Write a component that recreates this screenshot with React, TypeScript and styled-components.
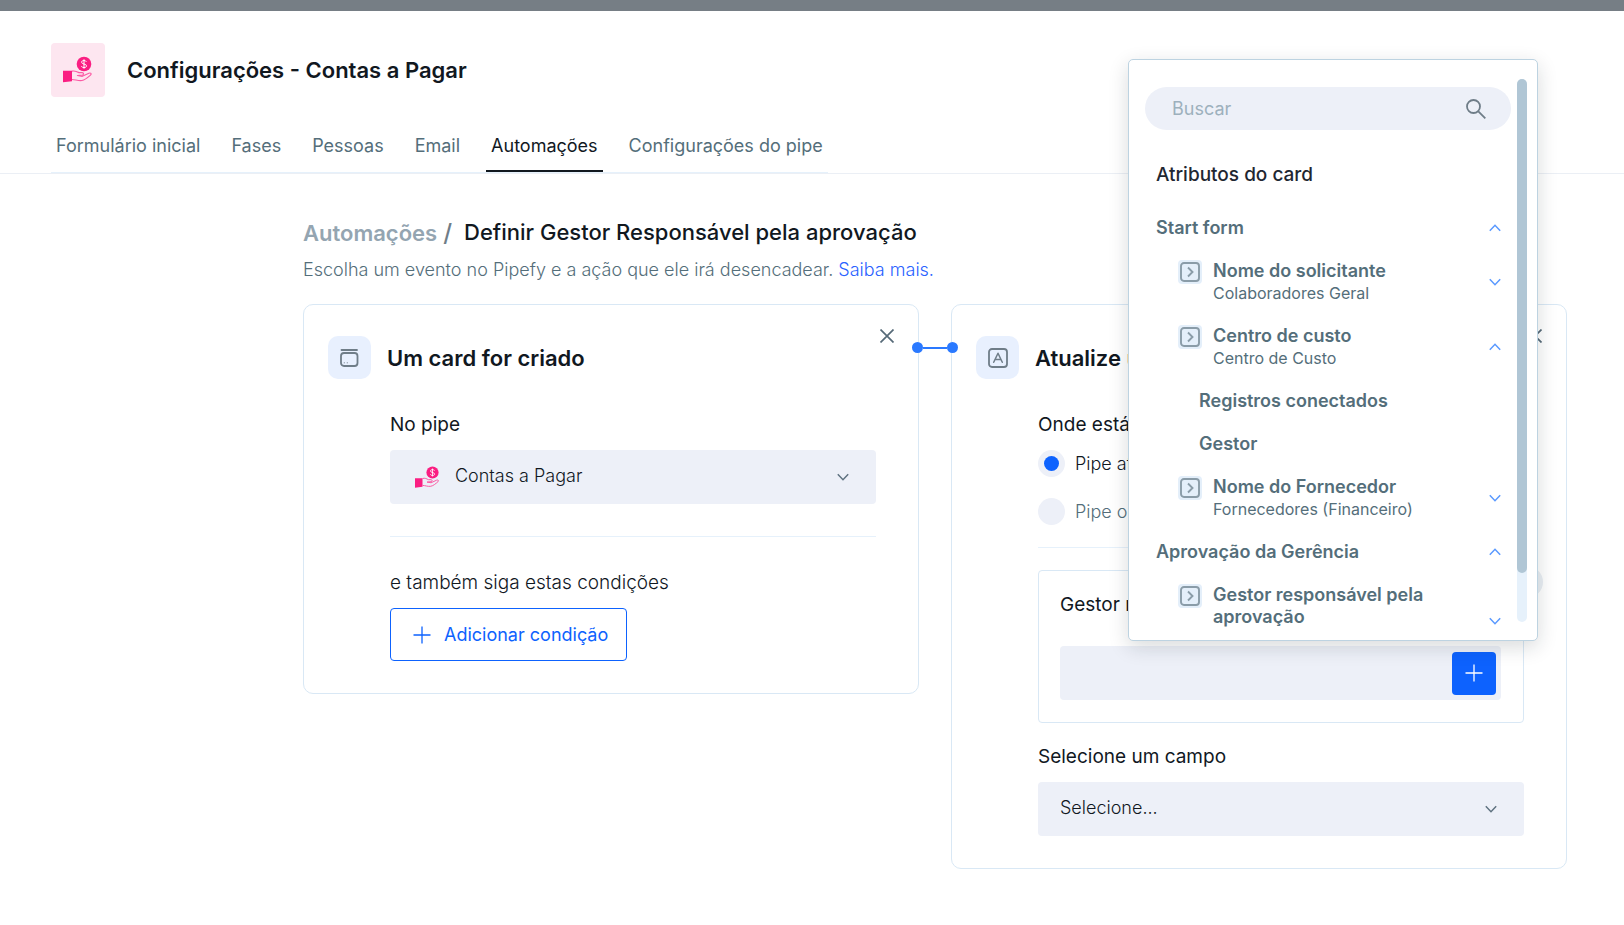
import React from "react";
import styled, { createGlobalStyle, css } from "styled-components";

const color = {
  ink: "#11181f",
  slate: "#546e7a",
  muted: "#94a5b1",
  line: "#d9e8f5",
  rule: "#e6f1fb",
  field: "#edf0f8",
  tint: "#e8f0fe",
  blue: "#0d62fe",
  link: "#2a62ff",
  pink: "#fa1e82",
  icon: "#6f7d88",
};

const GlobalStyle = createGlobalStyle`
  *, *::before, *::after { box-sizing: border-box; }
  body {
    margin: 0;
    background: #fff;
    color: ${color.ink};
    font-family: Inter, "Liberation Sans", sans-serif;
    font-size: 18px;
    line-height: 22px;
  }
  h1, h2, h3, p { margin: 0; padding: 0; }
  a { text-decoration: none; }
  button, input, select { font: inherit; color: inherit; }
  button { cursor: pointer; padding: 0; border: 0; background: none; }
  svg { display: block; flex: none; }
`;

const Page = styled.div`
  position: relative;
  border-top: 11px solid #767e85;
  padding-bottom: 56px;
`;

const Header = styled.header`
  padding: 32px 51px 0;
  border-bottom: 1px solid #ebeff5;
`;

const Brand = styled.div`
  display: flex;
  align-items: center;
  gap: 22px;
`;

const BrandIcon = styled.div`
  display: grid;
  place-items: center;
  width: 54px;
  height: 54px;
  border-radius: 4px;
  background: #fde6f0;
`;

const PageTitle = styled.h1`
  font-size: 22px;
  line-height: 28px;
  font-weight: 600;
`;

const Tabs = styled.nav`
  display: flex;
  gap: 21px;
  width: max-content;
  margin-top: 32px;
  border-bottom: 1px solid ${color.rule};
`;

const Tab = styled.a<{ $active?: boolean }>`
  height: 43px;
  padding: 6px 5px 0;
  color: ${(p) => (p.$active ? color.ink : color.slate)};
  border-bottom: 2px solid ${(p) => (p.$active ? color.ink : "transparent")};
`;

const Main = styled.main`
  padding: 44px 57px 0 303px;
`;

const Crumbs = styled.div`
  display: flex;
  align-items: center;
  font-size: 22px;
  line-height: 28px;
`;

const CrumbLink = styled.a`
  color: ${color.muted};
  font-weight: 600;
`;

const Slash = styled.span`
  margin: 0 12px 0 6px;
  color: ${color.icon};
  font-size: 24px;
  font-weight: 500;
`;

const CrumbTitle = styled.h2`
  padding-bottom: 2px;
  font-size: 22px;
  line-height: 28px;
  font-weight: 500;
`;

const Lead = styled.p`
  margin-top: 11px;
  color: ${color.slate};
  font-weight: 300;
`;

const Link = styled.a`
  color: ${color.link};
`;

const Columns = styled.div`
  display: grid;
  grid-template-columns: 1fr 1fr;
  gap: 32px;
  align-items: start;
  margin-top: 23px;
`;

const Card = styled.section`
  position: relative;
  min-width: 0;
  padding: 31px 42px 32px 24px;
  border: 1px solid ${color.line};
  border-radius: 10px;
`;

const CardHead = styled.div`
  display: flex;
  align-items: center;
  gap: 16px;
`;

const CardIcon = styled.div`
  display: grid;
  place-items: center;
  flex: none;
  width: 43px;
  height: 43px;
  border-radius: 10px;
  background: ${color.tint};
`;

const CardTitle = styled.h3`
  overflow: hidden;
  font-size: 22px;
  line-height: 28px;
  font-weight: 600;
  white-space: nowrap;
`;

const Close = styled.button`
  position: absolute;
  top: 24px;
  right: 24px;
`;

const CardBody = styled.div`
  padding: 33px 0 0 62px;
`;

const Label = styled.label`
  display: block;
  font-size: 19px;
  line-height: 26px;
`;

const Legend = styled.legend`
  padding: 0;
  font-size: 19px;
  line-height: 26px;
`;

const SelectBox = styled.div`
  position: relative;
  display: flex;
  align-items: center;
  margin-top: 12px;
`;

const Select = styled.select<{ $withIcon?: boolean }>`
  appearance: none;
  width: 100%;
  height: 54px;
  padding: 0 48px 2px ${(p) => (p.$withIcon ? 65 : 22)}px;
  border: 0;
  border-radius: 4px;
  background: ${color.field};
  font-weight: 300;
`;

const SelectIcon = styled.span`
  position: absolute;
  left: 25px;
  pointer-events: none;
`;

const SelectArrow = styled.span`
  position: absolute;
  right: 26px;
  pointer-events: none;
`;

const Divider = styled.hr<{ $gap: number }>`
  height: 1px;
  margin: ${(p) => p.$gap}px 0 0;
  border: 0;
  background: ${color.rule};
`;

const Conditions = styled.p`
  margin-top: 33px;
  font-size: 19px;
  line-height: 26px;
  font-weight: 300;
`;

const AddCondition = styled.button`
  display: flex;
  align-items: center;
  gap: 13px;
  height: 53px;
  margin-top: 12px;
  padding: 0 18px 0 22px;
  border: 1px solid ${color.blue};
  border-radius: 4px;
  color: ${color.blue};
`;

const Connector = styled.div`
  position: absolute;
  top: 37px;
  left: -40px;
  display: flex;
  align-items: center;
`;

const Dot = styled.i`
  width: 11px;
  height: 11px;
  border-radius: 50%;
  background: #2a79ff;
`;

const Wire = styled.i`
  width: 24px;
  height: 2px;
  background: #2a79ff;
`;

const Choices = styled.fieldset`
  min-width: 0;
  margin: 0;
  padding: 0;
  border: 0;
`;

const Choice = styled.label<{ $dim?: boolean }>`
  display: flex;
  align-items: center;
  gap: 10px;
  height: 27px;
  margin-top: ${(p) => (p.$dim ? 21 : 12)}px;
  color: ${(p) => (p.$dim ? color.slate : color.ink)};
  font-weight: 300;
`;

const Radio = styled.input`
  appearance: none;
  display: grid;
  place-items: center;
  width: 27px;
  height: 27px;
  margin: 0;
  border-radius: 50%;
  background: ${color.field};

  &:checked::before {
    content: "";
    width: 15px;
    height: 15px;
    border-radius: 50%;
    background: ${color.blue};
  }
`;

const FieldGroup = styled.div`
  position: relative;
  margin-top: 22px;
  padding: 21px 22px 22px 21px;
  border: 1px solid ${color.line};
  border-radius: 4px;
`;

const Remove = styled.button`
  position: absolute;
  top: -5px;
  right: -20px;
  width: 32px;
  height: 32px;
  border-radius: 50%;
  background: #e9eef4;
`;

const FieldRow = styled.div`
  display: flex;
  align-items: center;
  margin-top: 28px;
  padding-right: 5px;
  border-radius: 4px;
  background: ${color.field};
`;

const FieldInput = styled.input`
  flex: 1;
  min-width: 0;
  height: 54px;
  padding: 0 22px;
  border: 0;
  background: none;
`;

const AddField = styled.button`
  display: grid;
  place-items: center;
  width: 44px;
  height: 43px;
  border-radius: 4px;
  background: ${color.blue};
  color: #fff;
`;

const LastField = styled.div`
  margin-top: 21px;
`;

const Popover = styled.aside`
  position: absolute;
  top: 48px;
  right: 86px;
  display: flex;
  justify-content: space-between;
  width: 410px;
  padding: 19px 10px 12px 16px;
  border: 1px solid #bdd3e1;
  border-radius: 5px;
  background: #fff;
  box-shadow: 0 6px 20px rgba(20, 30, 40, 0.16);
`;

const PopoverBody = styled.div`
  width: 366px;
  padding-top: 8px;
`;

const Search = styled.div`
  display: flex;
  align-items: center;
  height: 43px;
  padding: 0 25px 0 27px;
  border-radius: 22px;
  background: ${color.field};
`;

const SearchInput = styled.input`
  flex: 1;
  min-width: 0;
  padding: 0;
  border: 0;
  outline: 0;
  background: none;

  &::placeholder {
    color: #9db0bd;
    opacity: 1;
  }
`;

const ListTitle = styled.h3`
  margin: 34px 0 31px 11px;
  font-size: 19px;
  line-height: 22px;
  font-weight: 500;
  color: #1f2732;
`;

const List = styled.div`
  display: flex;
  flex-direction: column;
  gap: 21px;
`;

const rowLayout = css`
  display: flex;
  width: 100%;
  padding-right: 9px;
  text-align: left;
  color: ${color.slate};
`;

const GroupRow = styled.button`
  ${rowLayout}
  align-items: center;
  justify-content: space-between;
  padding-left: 11px;
  font-weight: 600;
`;

const FieldItem = styled.button<{ $wraps: boolean }>`
  ${rowLayout}
  align-items: ${(p) => (p.$wraps ? "flex-end" : "center")};
  padding-left: 33px;
`;

const FieldBadge = styled.span`
  display: grid;
  place-items: center;
  align-self: flex-start;
  flex: none;
  width: 24px;
  height: 24px;
  margin-right: 11px;
  border-radius: 4px;
  background: #e4effa;
`;

const FieldText = styled.span`
  flex: 1;
  display: flex;
  flex-direction: column;
`;

const FieldName = styled.span`
  max-width: 220px;
  font-weight: 600;
`;

const FieldSource = styled.span`
  font-size: 16px;
`;

const SubItem = styled.button`
  ${rowLayout}
  padding-left: 54px;
  font-weight: 600;
`;

const ScrollTrack = styled.div`
  width: 10px;
  margin-bottom: 6px;
  border-radius: 5px;
  background: #e6f1fb;
`;

const ScrollThumb = styled.div`
  height: 91%;
  border-radius: 5px;
  background: #b0c6d5;
`;

function HandCoin({ size }: { size: number }) {
  return (
    <svg width={size} height={size} viewBox="1 0 30 30" fill="none">
      <circle cx="22" cy="9" r="7.3" fill={color.pink} />
      <path
        d="M24.4 6.8c-.4-.9-1.300-1.300-2.400-1.300-1.400 0-2.400.6-2.400 1.700 0 2.500 4.900 1.200 4.900 3.700 0 1.100-1.100 1.700-2.500 1.700-1.300 0-2.200-.5-2.600-1.400M22 4.300v9.400"
        stroke="#fff"
        strokeWidth="1"
      />
      <path d="M1 15.800h9v10.400L1 27.300z" fill={color.pink} />
      <path
        d="M10 16.200c3-.8 5 .3 7 1.400h3.200c1.600 0 1.900 2.100.2 2.400l-5 .5 4.900.8 6.600-3.100c1.900-.7 3 .7 1.600 1.900-2.500 2.200-5.500 4.800-8.500 5.400-3.500.6-7-1-10-1"
        stroke="#fb5ba4"
        strokeWidth="1.200"
        strokeLinejoin="round"
      />
    </svg>
  );
}

function Chevron({ up, stroke = "#5f7280" }: { up?: boolean; stroke?: string }) {
  return (
    <svg width="14" height="14" viewBox="0 0 14 14" fill="none" stroke={stroke} strokeWidth="1.500">
      <path d={up ? "M1.800 9.700 7 4.300l5.200 5.400" : "M1.800 4.300 7 9.700l5.200-5.400"} />
    </svg>
  );
}

function Plus() {
  return (
    <svg width="18" height="18" viewBox="0 0 18 18" stroke="currentColor" strokeWidth="1.300">
      <path d="M9 .5v17M.5 9h17" />
    </svg>
  );
}

function Cross() {
  return (
    <svg width="14" height="14" viewBox="0 0 14 14" stroke="#566a78" strokeWidth="1.700">
      <path d="M.5.5l13 13M13.500.5l-13 13" />
    </svg>
  );
}

function CardGlyph() {
  return (
    <svg width="20" height="20" viewBox="1 0 20 20" fill="none" stroke={color.icon} strokeWidth="1.800" strokeLinecap="round">
      <path d="M2.500 2h15.500" />
      <rect x="2" y="5" width="16.500" height="13" rx="3" />
      <path d="M5.200 14.800h.2M8.200 14.800h.2" strokeWidth="1" />
    </svg>
  );
}

function LetterGlyph() {
  return (
    <svg width="20" height="20" viewBox="0 0 20 20" fill="none" stroke={color.icon} strokeWidth="1.800" strokeLinecap="round" strokeLinejoin="round">
      <rect x="1" y="1" width="18" height="18" rx="3" />
      <path d="M5.700 14.300 10 5.200l4.300 9.100M7.200 11.600h5.600" strokeWidth="1.500" />
    </svg>
  );
}

function FieldGlyph() {
  return (
    <svg width="20" height="20" viewBox="0 0 20 20" fill="none" stroke="#8a9ca8" strokeWidth="1.900">
      <rect x="1" y="1" width="18" height="18" rx="3" />
      <path d="m8 5.500 4.500 4.500L8 14.500" />
    </svg>
  );
}

function Magnifier() {
  return (
    <svg width="20" height="20" viewBox="0 0 20 20" fill="none" stroke={color.icon} strokeWidth="1.800">
      <circle cx="7.500" cy="7.500" r="6.500" />
      <path d="m12.300 12.300 7 7" />
    </svg>
  );
}

const tabs = ["Formulário inicial", "Fases", "Pessoas", "Email", "Automações", "Configurações do pipe"];

function Group({ children }: { children: React.ReactNode }) {
  return (
    <GroupRow type="button">
      {children}
      <Chevron up stroke="#5a99ff" />
    </GroupRow>
  );
}

function Field({ name, source, open }: { name: string; source?: string; open?: boolean }) {
  return (
    <FieldItem type="button" $wraps={!source}>
      <FieldBadge>
        <FieldGlyph />
      </FieldBadge>
      <FieldText>
        <FieldName>{name}</FieldName>
        {source && <FieldSource>{source}</FieldSource>}
      </FieldText>
      <Chevron up={open} stroke="#5a99ff" />
    </FieldItem>
  );
}

export default function App() {
  return (
    <Page>
      <GlobalStyle />
      <Header>
        <Brand>
          <BrandIcon>
            <HandCoin size={30} />
          </BrandIcon>
          <PageTitle>Configurações - Contas a Pagar</PageTitle>
        </Brand>
        <Tabs>
          {tabs.map((tab) => (
            <Tab key={tab} href="#" $active={tab === "Automações"}>
              {tab}
            </Tab>
          ))}
        </Tabs>
      </Header>

      <Main>
        <Crumbs>
          <CrumbLink href="#">Automações</CrumbLink>
          <Slash>/</Slash>
          <CrumbTitle>Definir Gestor Responsável pela aprovação</CrumbTitle>
        </Crumbs>
        <Lead>
          Escolha um evento no Pipefy e a ação que ele irá desencadear. <Link href="#">Saiba mais.</Link>
        </Lead>

        <Columns>
          <Card>
            <CardHead>
              <CardIcon>
                <CardGlyph />
              </CardIcon>
              <CardTitle>Um card for criado</CardTitle>
            </CardHead>
            <Close type="button" aria-label="Fechar">
              <Cross />
            </Close>
            <CardBody>
              <Label htmlFor="pipe">No pipe</Label>
              <SelectBox>
                <Select id="pipe" $withIcon>
                  <option>Contas a Pagar</option>
                </Select>
                <SelectIcon>
                  <HandCoin size={25} />
                </SelectIcon>
                <SelectArrow>
                  <Chevron />
                </SelectArrow>
              </SelectBox>
              <Divider $gap={32} />
              <Conditions>e também siga estas condições</Conditions>
              <AddCondition type="button">
                <Plus />
                Adicionar condição
              </AddCondition>
            </CardBody>
          </Card>

          <Card>
            <Connector>
              <Dot />
              <Wire />
              <Dot />
            </Connector>
            <CardHead>
              <CardIcon>
                <LetterGlyph />
              </CardIcon>
              <CardTitle>Atualize um card</CardTitle>
            </CardHead>
            <Close type="button" aria-label="Fechar">
              <Cross />
            </Close>
            <CardBody>
              <Choices>
                <Legend>Onde está o card</Legend>
                <Choice>
                  <Radio type="radio" name="where" defaultChecked />
                  Pipe atual
                </Choice>
                <Choice $dim>
                  <Radio type="radio" name="where" />
                  Pipe ou database
                </Choice>
              </Choices>
              <Divider $gap={22} />
              <FieldGroup>
                <Remove type="button" aria-label="Remover campo" />
                <Label htmlFor="manager">Gestor responsável</Label>
                <FieldRow>
                  <FieldInput id="manager" />
                  <AddField type="button" aria-label="Inserir atributo">
                    <Plus />
                  </AddField>
                </FieldRow>
              </FieldGroup>
              <LastField>
                <Label htmlFor="field">Selecione um campo</Label>
                <SelectBox>
                  <Select id="field">
                    <option>Selecione...</option>
                  </Select>
                  <SelectArrow>
                    <Chevron />
                  </SelectArrow>
                </SelectBox>
              </LastField>
            </CardBody>
          </Card>
        </Columns>
      </Main>

      <Popover>
        <PopoverBody>
          <Search>
            <SearchInput type="text" placeholder="Buscar" aria-label="Buscar" />
            <Magnifier />
          </Search>
          <ListTitle>Atributos do card</ListTitle>
          <List>
            <Group>Start form</Group>
            <Field name="Nome do solicitante" source="Colaboradores Geral" />
            <Field name="Centro de custo" source="Centro de Custo" open />
            <SubItem type="button">Registros conectados</SubItem>
            <SubItem type="button">Gestor</SubItem>
            <Field name="Nome do Fornecedor" source="Fornecedores (Financeiro)" />
            <Group>Aprovação da Gerência</Group>
            <Field name="Gestor responsável pela aprovação" />
          </List>
        </PopoverBody>
        <ScrollTrack>
          <ScrollThumb />
        </ScrollTrack>
      </Popover>
    </Page>
  );
}
